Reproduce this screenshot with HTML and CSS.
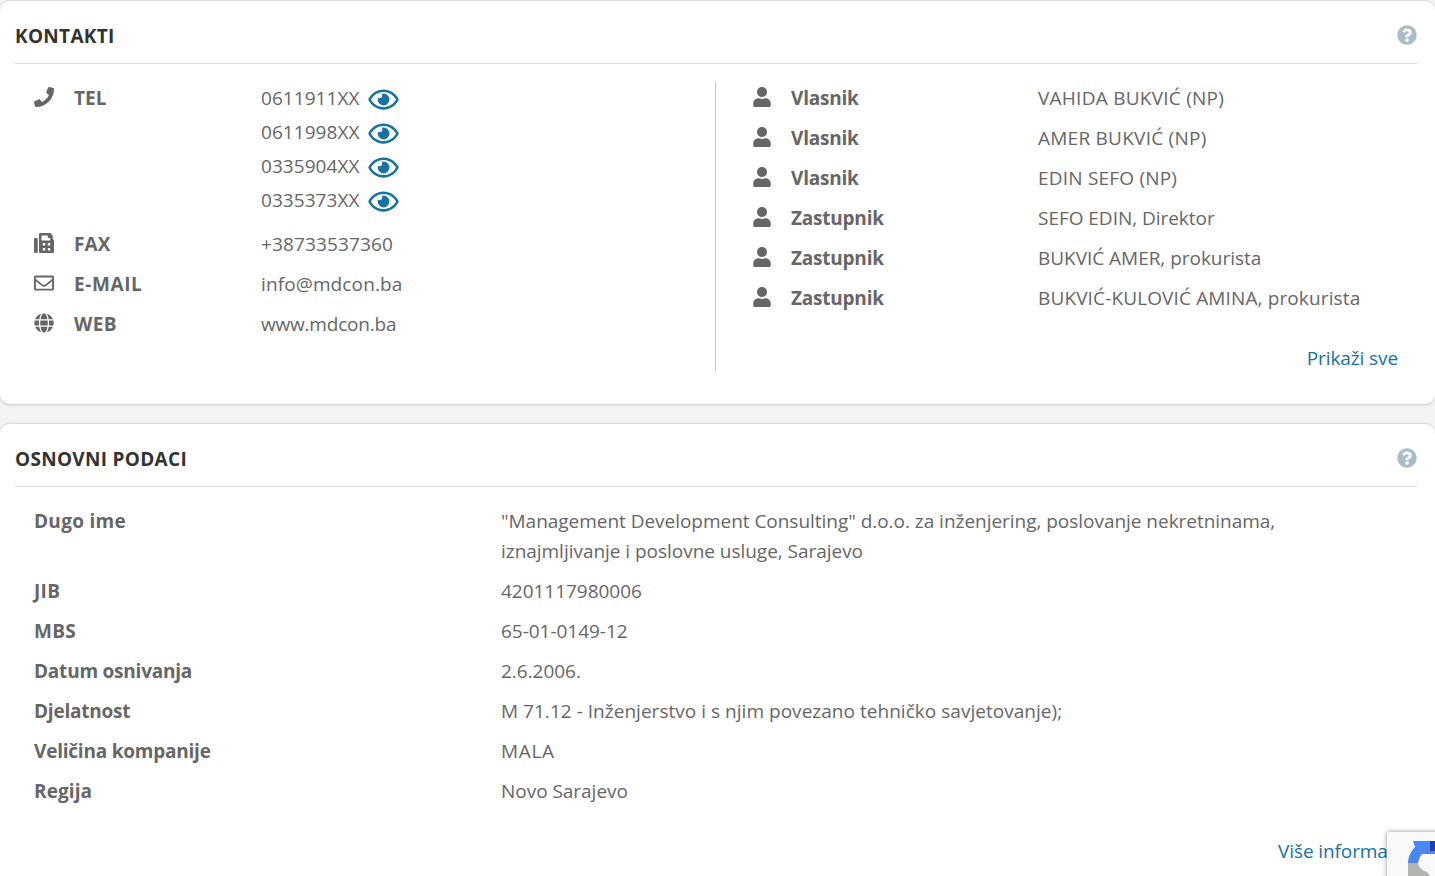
FILE: index.html
```html
<!DOCTYPE html>
<html lang="bs">
<head>
<meta charset="utf-8">
<title>Kontakti</title>
<link rel="stylesheet" href="styles.css">
</head>
<body>
<svg class="defs" width="0" height="0" aria-hidden="true">
<symbol id="i-phone" viewBox="0 0 512 512"><path d="M493.4 24.6l-104-24c-11.3-2.6-22.9 3.3-27.5 13.9l-48 112c-4.2 9.8-1.4 21.3 6.9 28l60.6 49.6c-36 76.7-98.9 140.5-177.2 177.2l-49.6-60.6c-6.8-8.3-18.2-11.1-28-6.9l-112 48C3.9 366.5-2 378.1.6 389.4l24 104C27.1 504.2 36.7 512 48 512c256.1 0 464-207.5 464-464 0-11.2-7.7-20.9-18.6-23.4z"/></symbol>
<symbol id="i-user" viewBox="0 0 448 512"><path d="M224 256c70.7 0 128-57.3 128-128S294.7 0 224 0 96 57.3 96 128s57.3 128 128 128zm89.6 32h-16.7c-22.2 10.2-46.9 16-72.9 16s-50.6-5.8-72.9-16h-16.7C60.2 288 0 348.2 0 422.4V464c0 26.5 21.5 48 48 48h352c26.5 0 48-21.5 48-48v-41.6c0-74.2-60.2-134.4-134.4-134.4z"/></symbol>
<symbol id="i-fax" viewBox="0 0 512 512"><path d="M480 160V77.25a32 32 0 0 0-9.38-22.63L425.37 9.37A32 32 0 0 0 402.75 0H160a32 32 0 0 0-32 32v448a32 32 0 0 0 32 32h320a32 32 0 0 0 32-32V192a32 32 0 0 0-32-32zM288 432a16 16 0 0 1-16 16h-32a16 16 0 0 1-16-16v-32a16 16 0 0 1 16-16h32a16 16 0 0 1 16 16zm0-128a16 16 0 0 1-16 16h-32a16 16 0 0 1-16-16v-32a16 16 0 0 1 16-16h32a16 16 0 0 1 16 16zm128 128a16 16 0 0 1-16 16h-32a16 16 0 0 1-16-16v-32a16 16 0 0 1 16-16h32a16 16 0 0 1 16 16zm0-128a16 16 0 0 1-16 16h-32a16 16 0 0 1-16-16v-32a16 16 0 0 1 16-16h32a16 16 0 0 1 16 16zm0-112H192V64h160v48a16 16 0 0 0 16 16h48zM64 128H32a32 32 0 0 0-32 32v320a32 32 0 0 0 32 32h32a32 32 0 0 0 32-32V160a32 32 0 0 0-32-32z"/></symbol>
<symbol id="i-mail" viewBox="0 0 512 512"><path d="M464 64H48C21.49 64 0 85.49 0 112v288c0 26.51 21.49 48 48 48h416c26.51 0 48-21.49 48-48V112c0-26.51-21.49-48-48-48zm0 48v40.805c-22.422 18.259-58.168 46.651-134.587 106.49-16.841 13.247-50.201 45.072-73.413 44.701-23.208.375-56.579-31.459-73.413-44.701C106.18 199.465 70.425 171.067 48 152.805V112h416zM48 400V214.398c22.914 18.251 55.409 43.862 104.938 82.646 21.857 17.205 60.134 55.186 103.062 54.955 42.717.231 80.509-37.199 103.053-54.947 49.528-38.783 82.032-64.401 104.947-82.653V400H48z"/></symbol>
<symbol id="i-globe" viewBox="0 0 496 512"><path d="M336.5 160C322 70.7 287.8 8 248 8s-74 62.7-88.5 152h177zM152 256c0 22.2 1.2 43.5 3.3 64h185.3c2.1-20.5 3.3-41.8 3.3-64s-1.2-43.5-3.3-64H155.3c-2.1 20.5-3.3 41.8-3.3 64zm324.7-96c-28.6-67.9-86.5-120.4-158-141.6 24.4 33.8 41.2 84.7 50 141.6h108zM177.2 18.4C105.8 39.6 47.8 92.1 19.3 160h108c8.7-56.9 25.5-107.8 49.9-141.6zM487.4 192H372.7c2.1 21 3.3 42.5 3.3 64s-1.2 43-3.3 64h114.6c5.5-20.5 8.6-41.8 8.6-64s-3.1-43.5-8.5-64zM120 256c0-21.5 1.2-43 3.3-64H8.6C3.2 212.5 0 233.8 0 256s3.2 43.5 8.6 64h114.6c-2-21-3.2-42.5-3.2-64zm39.5 96c14.5 89.3 48.7 152 88.5 152s74-62.7 88.5-152h-177zm159.3 141.6c71.4-21.2 129.4-73.7 158-141.6h-108c-8.8 56.9-25.6 107.8-50 141.6zM19.3 352c28.6 67.9 86.5 120.4 158 141.6-24.4-33.8-41.2-84.7-50-141.6h-108z"/></symbol>
<symbol id="i-help" viewBox="0 0 512 512"><path d="M504 256c0 136.997-111.043 248-248 248S8 392.997 8 256C8 119.083 119.043 8 256 8s248 111.083 248 248zM262.655 90c-54.497 0-89.255 22.957-116.549 63.758-3.536 5.286-2.353 12.415 2.715 16.258l34.699 26.31c5.205 3.947 12.621 3.008 16.665-2.122 17.864-22.658 30.113-35.797 57.303-35.797 20.429 0 45.698 13.148 45.698 32.958 0 14.976-12.363 22.667-32.534 33.976C247.128 238.528 216 254.941 216 296v4c0 6.627 5.373 12 12 12h56c6.627 0 12-5.373 12-12v-1.333c0-28.462 83.186-29.647 83.186-106.667 0-58.002-60.165-102-116.531-102zM256 338c-25.365 0-46 20.635-46 46 0 25.364 20.635 46 46 46s46-20.636 46-46c0-25.365-20.635-46-46-46z"/></symbol>
<symbol id="i-eye" viewBox="0 0 576 512"><path d="M288 144a110.94 110.94 0 0 0-31.24 5 55.4 55.4 0 0 1 7.24 27 56 56 0 0 1-56 56 55.4 55.4 0 0 1-27-7.24A111.71 111.71 0 1 0 288 144zm284.52 97.4C518.29 135.59 410.93 64 288 64S57.68 135.64 3.48 241.41a32.35 32.35 0 0 0 0 29.19C57.71 376.41 165.07 448 288 448s230.32-71.64 284.52-177.41a32.35 32.35 0 0 0 0-29.19zM288 400c-98.65 0-189.09-55-237.93-144C98.91 167 189.34 112 288 112s189.09 55 237.93 144C477.1 345 386.66 400 288 400z"/></symbol>
</svg>

<section class="card card-contacts">
  <header class="card-head">
    <h2 class="card-title">KONTAKTI</h2>
    <svg class="help"><use href="#i-help"/></svg>
  </header>
  <div class="contact-body">
    <div class="contact-left">
      <div class="c-row c-row-tel">
        <svg class="c-icon"><use href="#i-phone"/></svg>
        <span class="c-label">TEL</span>
        <div class="phones">
          <div class="phone">0611911XX <svg class="eye"><use href="#i-eye"/></svg></div>
          <div class="phone">0611998XX <svg class="eye"><use href="#i-eye"/></svg></div>
          <div class="phone">0335904XX <svg class="eye"><use href="#i-eye"/></svg></div>
          <div class="phone">0335373XX <svg class="eye"><use href="#i-eye"/></svg></div>
        </div>
      </div>
      <div class="c-row">
        <svg class="c-icon"><use href="#i-fax"/></svg>
        <span class="c-label">FAX</span>
        <span class="c-value c-num">+38733537360</span>
      </div>
      <div class="c-row">
        <svg class="c-icon"><use href="#i-mail"/></svg>
        <span class="c-label c-label-wide">E-MAIL</span>
        <span class="c-value c-mail">info@mdcon.ba</span>
      </div>
      <div class="c-row">
        <svg class="c-icon"><use href="#i-globe"/></svg>
        <span class="c-label c-label-web">WEB</span>
        <span class="c-value c-web">www.mdcon.ba</span>
      </div>
    </div>
    <div class="contact-right">
      <div class="p-row"><svg class="p-icon"><use href="#i-user"/></svg><span class="c-label">Vlasnik</span><span class="c-value v-caps">VAHIDA BUKVIĆ (NP)</span></div>
      <div class="p-row"><svg class="p-icon"><use href="#i-user"/></svg><span class="c-label">Vlasnik</span><span class="c-value v-caps">AMER BUKVIĆ (NP)</span></div>
      <div class="p-row"><svg class="p-icon"><use href="#i-user"/></svg><span class="c-label">Vlasnik</span><span class="c-value v-caps-s">EDIN SEFO (NP)</span></div>
      <div class="p-row"><svg class="p-icon"><use href="#i-user"/></svg><span class="c-label">Zastupnik</span><span class="c-value">SEFO EDIN, Direktor</span></div>
      <div class="p-row"><svg class="p-icon"><use href="#i-user"/></svg><span class="c-label">Zastupnik</span><span class="c-value">BUKVIĆ AMER, prokurista</span></div>
      <div class="p-row"><svg class="p-icon"><use href="#i-user"/></svg><span class="c-label">Zastupnik</span><span class="c-value v-long">BUKVIĆ-KULOVIĆ AMINA, prokurista</span></div>
      <a class="more more-right" href="#">Prikaži sve</a>
    </div>
  </div>
</section>

<section class="card card-basic">
  <header class="card-head">
    <h2 class="card-title">OSNOVNI PODACI</h2>
    <svg class="help"><use href="#i-help"/></svg>
  </header>
  <dl class="info">
    <dt class="dt-wide">Dugo ime</dt><dd>"Management Development Consulting" d.o.o. za inženjering, poslovanje nekretninama, iznajmljivanje i poslovne usluge, Sarajevo</dd>
    <dt class="dt-wide">JIB</dt><dd>4201117980006</dd>
    <dt class="dt-wide">MBS</dt><dd>65-01-0149-12</dd>
    <dt>Datum osnivanja</dt><dd>2.6.2006.</dd>
    <dt>Djelatnost</dt><dd class="dd-act">M 71.12 - Inženjerstvo i s njim povezano tehničko savjetovanje);</dd>
    <dt>Veličina kompanije</dt><dd class="dd-caps">MALA</dd>
    <dt class="dt-reg">Regija</dt><dd>Novo Sarajevo</dd>
  </dl>
  <a class="more more-basic" href="#">Više informacija</a>
</section>

<aside class="recaptcha">
  <svg class="rc-logo" viewBox="1387 832 48 44">
    <path fill="#b4b4b4" d="M1408 863h10c1 5 5 8 9 9l3 4h-22z"/>
    <path fill="#4a87f3" d="M1408 863c.4-7 3-12 7-16l-2-6h17v10h5v3h-13c-2 2-3 5-4 9z"/>
    <path fill="#2b3ea6" d="M1430 841h5v10h-5z"/>
  </svg>
</aside>
</body>
</html>
```
FILE: styles.css
```css
html, body { margin: 0; padding: 0; }
html { height: 876px; overflow: hidden; }
body {
  background: #f1f3f4;
  font-family: "Open Sans", "Noto Sans", sans-serif;
  font-size: 19px;
  line-height: 30px;
  color: #666;
  height: 876px;
  overflow: hidden;
  position: relative;
}
.defs { position: absolute; }
.card {
  background: #fff;
  border-top: 1px solid #d5dde2;
  border-radius: 10px;
  box-shadow: 0 1px 3px rgba(60, 75, 85, .25);
  padding: 0 18px 0 15px;
}
.card-contacts { height: 403px; margin-bottom: 19px; }
.card-basic { height: 460px; }
.card-head {
  height: 54px;
  padding-top: 8px;
  border-bottom: 1px solid #d5dde2;
  display: flex;
  align-items: center;
  justify-content: space-between;
}
.card-title {
  margin: 0;
  font-size: 19px;
  font-weight: 700;
  line-height: 30px;
  color: #333;
  letter-spacing: .3px;
}
.help { width: 20px; height: 20px; fill: #adbdc8; margin-top: -2px; }

.contact-body { display: flex; margin-top: 18px; height: 290px; }
.contact-left { border-right: 1px solid #c8c8c8; box-sizing: border-box; width: 701px; padding-top: 1px; }
.contact-right { flex: 1; padding-top: 1px; display: flex; flex-direction: column; }

.c-row { display: flex; align-items: flex-start; height: 30px; margin-bottom: 10px; }
.c-row-tel { height: 136px; }
.c-icon { width: 20px; height: 20px; fill: #666; margin: 4px 0 0 19px; flex: none; }
.c-label { font-weight: 700; letter-spacing: -.22px; }
.c-row .c-label { margin-left: 20px; width: 187px; flex: none; letter-spacing: .1px; }
.c-row .c-label-wide { letter-spacing: .6px; }
.c-row .c-label-web { letter-spacing: .4px; }
.c-value { letter-spacing: -.03px; }
.c-num { letter-spacing: .13px; }
.c-mail { letter-spacing: .12px; }
.c-web { letter-spacing: -.2px; }
.v-caps { letter-spacing: .25px; }
.v-caps-s { letter-spacing: .2px; }
.v-long { letter-spacing: .13px; }
.phones { margin-top: -2px; }
.phone { height: 34px; line-height: 34px; display: flex; align-items: center; gap: 9px; letter-spacing: .05px; }
.eye { width: 31px; height: 27px; fill: #17729f; margin-top: 2px; }

.p-row { display: flex; align-items: flex-start; height: 30px; margin-bottom: 10px; padding-left: 37px; }
.p-icon { width: 18px; height: 20px; fill: #666; margin-top: 4px; flex: none; }
.p-row .c-label { margin-left: 20px; width: 247px; flex: none; }

.more { color: #17729f; text-decoration: none; letter-spacing: -.1px; white-space: nowrap; }
.more-right { align-self: flex-end; margin: 20px 19px 0 0; }
.more-basic { display: block; margin: 30px 0 0 1263px; }

.info {
  display: grid;
  grid-template-columns: 467px 1fr;
  row-gap: 10px;
  margin: 19px 0 0;
  padding-left: 19px;
}
.info dt { font-weight: 700; letter-spacing: -.22px; }
.info .dt-wide { letter-spacing: .3px; }
.info .dt-reg { letter-spacing: .1px; }
.info dd { margin: 0; width: 800px; letter-spacing: -.03px; }
.info .dd-act { letter-spacing: .03px; }
.info .dd-caps { letter-spacing: .7px; }

.recaptcha {
  position: absolute;
  left: 1387px;
  top: 832px;
  width: 60px;
  height: 60px;
  background: #f9f9f9;
  box-shadow: 0 0 5px rgba(0, 0, 0, .45);
  border-radius: 2px;
}
.rc-logo { display: block; width: 48px; height: 44px; }
```
